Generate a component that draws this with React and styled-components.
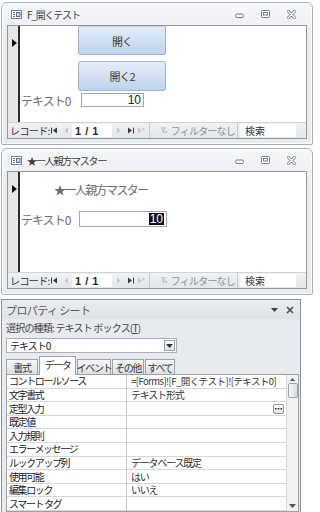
import React from "react";
import styled, { createGlobalStyle } from "styled-components";

const GlobalStyle = createGlobalStyle`
  html, body {
    margin: 0;
    background: #fff;
  }
  body {
    font-family: "Noto Sans CJK JP", "Noto Sans", sans-serif;
    color: #222;
  }
`;

const Page = styled.div`
  width: 320px;
  height: 512px;
  overflow: hidden;
  box-sizing: border-box;
  padding-top: 2px;
  display: flex;
  flex-direction: column;
  gap: 3px;
`;

/* ---------- form window ---------- */

const Frame = styled.div`
  margin-left: 1px;
  width: 312px;
  box-sizing: border-box;
  border: 1px solid #a7afb9;
  border-radius: 6px 6px 2px 2px;
  background: linear-gradient(#f6f7f9, #e8ebef 40px);
  box-shadow: inset 0 0 0 1px rgba(255, 255, 255, 0.8);
  padding: 0 5px 5px 5px;
`;

const TitleBar = styled.div`
  height: 22px;
  display: flex;
  align-items: center;
  padding: 0 11px 0 4px;
  font-size: 10px;
  color: #3d3d3d;
`;

const TitleText = styled.span`
  margin-left: 5px;
  flex: 1;
  white-space: nowrap;
  letter-spacing: -1.2px;
`;

const Controls = styled.div`
  display: flex;
  align-items: center;
  gap: 17px;
`;

const Client = styled.div`
  border: 1px solid #8f969f;
  background: #fff;
`;

const Body = styled.div`
  display: flex;
  height: ${(p) => p.$h}px;
`;

const Selector = styled.div`
  width: 12px;
  background: #e6e6e6;
  border-right: 2px solid #2b2b2b;
  padding: 2px 0 0 4px;
  box-sizing: border-box;
  flex: none;
`;

const Canvas = styled.div`
  flex: 1;
  display: flex;
  flex-direction: column;
  padding-left: 1px;
`;

const CmdButton = styled.div`
  margin-left: 57px;
  margin-top: ${(p) => p.$top}px;
  width: 88px;
  height: ${(p) => p.$h}px;
  box-sizing: border-box;
  border: 1px solid #9fb3cc;
  border-top-color: ${(p) => (p.$cut ? "transparent" : "#a9bcd3")};
  border-radius: ${(p) => (p.$cut ? "0 0 3px 3px" : "3px")};
  background: linear-gradient(#e4edf8, #cfdff2 55%, #bfd3ec);
  display: flex;
  align-items: center;
  justify-content: center;
  font-size: 11px;
  letter-spacing: -1px;
  color: #3a3a3a;
`;

const FormTitle = styled.div`
  margin: 9px 0 0 33px;
  font-size: 12px;
  letter-spacing: -1.6px;
  color: #6b6b6b;
  height: 18px;
  line-height: 18px;
  white-space: nowrap;
`;

const FieldRow = styled.div`
  display: flex;
  align-items: center;
  margin-top: ${(p) => p.$top}px;
`;

const FieldLabel = styled.span`
  width: ${(p) => p.$w}px;
  font-size: 12px;
  letter-spacing: -1px;
  color: #6e6e6e;
  line-height: 13px;
  white-space: nowrap;
`;

const FieldInput = styled.div`
  width: ${(p) => p.$w}px;
  height: ${(p) => p.$h}px;
  box-sizing: border-box;
  border: 1px solid #a6a6a6;
  background: #fff;
  display: flex;
  align-items: center;
  justify-content: flex-end;
  padding-right: 2px;
  font-family: "Liberation Sans", sans-serif;
  font-size: 12px;
  color: #222;
`;

const Selected = styled.span`
  background: #111;
  color: #fff;
  line-height: 12px;
  padding: 0 1px;
`;

/* ---------- navigation bar ---------- */

const NavBar = styled.div`
  height: 15px;
  display: flex;
  align-items: center;
  border-top: 1px solid #cfd3d8;
  background: linear-gradient(#f0f2f4, #e3e6ea);
  font-size: 10px;
  color: #333;
`;

const NavLabel = styled.span`
  width: 38px;
  padding-left: 2px;
  white-space: nowrap;
  letter-spacing: -0.6px;
`;

const NavIcon = styled.span`
  width: ${(p) => p.$w || 12}px;
  display: flex;
  justify-content: center;
  align-items: center;
`;

const RecordBox = styled.div`
  width: 40px;
  height: 13px;
  background: #fff;
  display: flex;
  align-items: center;
  padding-left: 3px;
  box-sizing: border-box;
  font-family: "Liberation Sans", sans-serif;
  font-size: 11px;
  font-weight: bold;
  color: #2a2a2a;
  letter-spacing: 0.5px;
`;

const NavSep = styled.span`
  width: 1px;
  height: 15px;
  background: #c6cbd1;
  margin: 0 ${(p) => p.$m || 3}px;
`;

const FilterText = styled.span`
  display: flex;
  align-items: center;
  gap: 3px;
  color: #8f8f8f;
  width: 74px;
  padding-left: 8px;
  white-space: nowrap;
  letter-spacing: -0.8px;
`;

const SearchBox = styled.div`
  width: 56px;
  height: 13px;
  background: #fff;
  padding-left: 5px;
  box-sizing: border-box;
  line-height: 13px;
  color: #333;
`;

/* ---------- property sheet ---------- */

const Sheet = styled.div`
  margin-left: 1px;
  margin-top: 1px;
  width: 300px;
  height: 218px;
  box-sizing: border-box;
  border: 1px solid #8b929b;
  background: #e7eaee;
  padding: 0 4px 4px;
  display: flex;
  flex-direction: column;
`;

const SheetHeader = styled.div`
  height: 20px;
  margin: 0 -4px;
  padding: 0 6px 0 4px;
  display: flex;
  align-items: center;
  background: linear-gradient(#e9ecf0, #dfe3e8);
  font-size: 11px;
  color: #5a5a5a;
`;

const SheetTitle = styled.span`
  flex: 1;
  letter-spacing: -0.6px;
`;

const HeaderButtons = styled.div`
  display: flex;
  align-items: center;
  gap: 8px;
`;

const SelectionType = styled.div`
  height: 17px;
  line-height: 17px;
  font-size: 10px;
  letter-spacing: -0.8px;
  color: #444;
  white-space: nowrap;
  u {
    text-decoration: underline;
  }
`;

const Combo = styled.div`
  margin-top: 2px;
  width: 171px;
  height: 15px;
  box-sizing: border-box;
  border: 1px solid #a9b0b9;
  background: #fff;
  display: flex;
  align-items: center;
  padding-left: 3px;
  font-size: 10px;
  letter-spacing: -1px;
`;

const ComboText = styled.span`
  flex: 1;
`;

const ComboButton = styled.span`
  width: 11px;
  height: 11px;
  margin-right: 1px;
  box-sizing: border-box;
  border: 1px solid #9ba3ad;
  background: linear-gradient(#fbfbfb, #e2e4e7);
  display: flex;
  align-items: center;
  justify-content: center;
`;

const Tabs = styled.div`
  margin-top: 3px;
  height: 19px;
  display: flex;
  align-items: flex-end;
  gap: 1px;
  position: relative;
  z-index: 1;
`;

const Tab = styled.div`
  width: ${(p) => p.$w}px;
  height: ${(p) => (p.$active ? 19 : 16)}px;
  box-sizing: border-box;
  border: 1px solid #9aa1aa;
  border-bottom: ${(p) => (p.$active ? "none" : "1px solid #9aa1aa")};
  background: ${(p) =>
    p.$active ? "#fff" : "linear-gradient(#f7f7f7, #dcdfe3)"};
  display: flex;
  align-items: center;
  justify-content: center;
  font-size: 10px;
  letter-spacing: -1.3px;
  white-space: nowrap;
  color: #333;
  padding-bottom: ${(p) => (p.$active ? 3 : 0)}px;
`;

const GridWrap = styled.div`
  display: flex;
  margin-top: -1px;
  width: 291px;
  border: 1px solid #9aa1aa;
  background: #fff;
`;

const Grid = styled.div`
  flex: 1;
  min-width: 0;
  display: grid;
  grid-template-columns: 120px minmax(0, 1fr);
  grid-auto-rows: 13.6px;
`;

const Cell = styled.div`
  border-bottom: 1px solid #d6d8db;
  border-right: ${(p) => (p.$name ? "1px solid #c3c6ca" : "none")};
  padding-left: ${(p) => (p.$name ? 2 : 4)}px;
  font-size: 10px;
  line-height: 12px;
  letter-spacing: ${(p) => (p.$name ? "-1.4px" : "-1.2px")};
  color: ${(p) => (p.$name ? "#222" : "#333")};
  white-space: nowrap;
  display: flex;
  align-items: center;
  justify-content: space-between;
`;

const Formula = styled.span`
  font-size: 9.5px;
  letter-spacing: -0.55px;
`;

const Ellipsis = styled.span`
  width: 11px;
  height: 10px;
  margin-right: 2px;
  box-sizing: border-box;
  border: 1px solid #8d949c;
  border-radius: 2px;
  background: linear-gradient(#fff, #e2e4e7);
  display: flex;
  align-items: center;
  justify-content: center;
`;

const ScrollBar = styled.div`
  width: 12px;
  border-left: 1px solid #d8dadd;
  background: #f1f1f1;
  display: flex;
  flex-direction: column;
  align-items: center;
  justify-content: space-between;
  padding: 3px 0;
  box-sizing: border-box;
`;

const Thumb = styled.div`
  width: 10px;
  height: 15px;
  box-sizing: border-box;
  border: 1px solid #9ea4ab;
  border-radius: 2px;
  background: linear-gradient(90deg, #f6f6f6, #dadcdf);
  margin-top: 2px;
`;

const ScrollSpacer = styled.div`
  flex: 1;
`;

/* ---------- icons ---------- */

const FormIcon = () => (
  <svg width="11" height="9" viewBox="0 0 11 9">
    <rect x="0.5" y="0.5" width="10" height="8" fill="#fff" stroke="#6f819b" />
    <path d="M2 2.5h2M2 4.5h2M2 6.5h2" stroke="#5f7290" />
    <rect x="5.5" y="2.5" width="3.5" height="4" fill="#c9d7ea" stroke="#5f7290" />
  </svg>
);

const MinIcon = () => (
  <svg width="9" height="9" viewBox="0 0 9 9">
    <rect x="0.5" y="4" width="8" height="3.5" rx="1.5" fill="#fff" stroke="#7a7f86" />
  </svg>
);

const MaxIcon = () => (
  <svg width="9" height="9" viewBox="0 0 9 9">
    <rect x="0.5" y="0.5" width="8" height="7" rx="1" fill="#fff" stroke="#7a7f86" />
    <rect x="2.5" y="2.5" width="4" height="2.5" fill="none" stroke="#7a7f86" />
  </svg>
);

const CloseIcon = () => (
  <svg width="9" height="9" viewBox="0 0 9 9">
    <path d="M1 1l7 7M8 1l-7 7" stroke="#7a7f86" strokeWidth="3" strokeLinecap="round" />
    <path d="M1 1l7 7M8 1l-7 7" stroke="#fff" strokeWidth="1.2" strokeLinecap="round" />
  </svg>
);

const RowMarker = () => (
  <svg width="5" height="8" viewBox="0 0 5 8">
    <path d="M0 0l5 4-5 4z" fill="#111" />
  </svg>
);

const NavGlyph = ({ kind, dim }) => {
  const c = dim ? "#c4c7cb" : "#3a3a3a";
  return (
    <svg width="8" height="7" viewBox="0 0 8 7">
      {kind === "first" && (
        <>
          <path d="M1.5 0.5v6" stroke={c} />
          <path d="M7 0.5L3 3.5l4 3z" fill={c} />
        </>
      )}
      {kind === "prev" && <path d="M6 0.5L2.5 3.5 6 6.5z" fill={c} />}
      {kind === "next" && <path d="M2 0.5l3.5 3-3.5 3z" fill={c} />}
      {kind === "last" && (
        <>
          <path d="M1 0.5l4 3-4 3z" fill={c} />
          <path d="M6.5 0.5v6" stroke={c} />
        </>
      )}
      {kind === "new" && (
        <>
          <path d="M1 0.5l4 3-4 3z" fill={c} />
          <path d="M6.5 0.5v3M5 2h3" stroke="#e3c77a" />
        </>
      )}
    </svg>
  );
};

const FilterIcon = () => (
  <svg width="10" height="9" viewBox="0 0 10 9">
    <path d="M0.5 0.5h6l-2.3 3v4l-1.4-1v-3z" fill="none" stroke="#a2a6ab" />
    <path d="M6 5l3 3M9 5l-3 3" stroke="#a2a6ab" />
  </svg>
);

const SmallDown = ({ color = "#333" }) => (
  <svg width="7" height="4" viewBox="0 0 7 4">
    <path d="M0 0h7L3.5 4z" fill={color} />
  </svg>
);

const SmallUp = ({ color = "#555" }) => (
  <svg width="5" height="3" viewBox="0 0 5 3">
    <path d="M0 3h5L2.5 0z" fill={color} />
  </svg>
);

const CloseX = () => (
  <svg width="8" height="8" viewBox="0 0 8 8">
    <path d="M1 1l6 6M7 1L1 7" stroke="#4a4f57" strokeWidth="1.6" />
  </svg>
);

const Dots = () => (
  <svg width="7" height="2" viewBox="0 0 7 2">
    <rect x="0" y="0" width="1.5" height="1.5" fill="#222" />
    <rect x="2.75" y="0" width="1.5" height="1.5" fill="#222" />
    <rect x="5.5" y="0" width="1.5" height="1.5" fill="#222" />
  </svg>
);

/* ---------- composites ---------- */

function NavigationBar() {
  return (
    <NavBar>
      <NavLabel>レコード:</NavLabel>
      <NavIcon $w={11}>
        <NavGlyph kind="first" />
      </NavIcon>
      <NavIcon $w={13}>
        <NavGlyph kind="prev" dim />
      </NavIcon>
      <RecordBox>1 / 1</RecordBox>
      <NavIcon $w={13}>
        <NavGlyph kind="next" dim />
      </NavIcon>
      <NavIcon $w={11}>
        <NavGlyph kind="last" />
      </NavIcon>
      <NavIcon $w={10}>
        <NavGlyph kind="new" dim />
      </NavIcon>
      <NavSep $m={3} />
      <FilterText>
        <FilterIcon />
        フィルターなし
      </FilterText>
      <NavSep $m={2} />
      <SearchBox>検索</SearchBox>
    </NavBar>
  );
}

function FormWindow({ title, bodyHeight, children }) {
  return (
    <Frame>
      <TitleBar>
        <FormIcon />
        <TitleText>{title}</TitleText>
        <Controls>
          <MinIcon />
          <MaxIcon />
          <CloseIcon />
        </Controls>
      </TitleBar>
      <Client>
        <Body $h={bodyHeight}>
          <Selector>
            <RowMarker />
          </Selector>
          <Canvas>{children}</Canvas>
        </Body>
        <NavigationBar />
      </Client>
    </Frame>
  );
}

const rows = [
  ["コントロールソース", "=[Forms]![F_開くテスト]![テキスト0]"],
  ["文字書式", "テキスト形式"],
  ["定型入力", "", true],
  ["既定値", ""],
  ["入力規則", ""],
  ["エラーメッセージ", ""],
  ["ルックアップ列", "データベース既定"],
  ["使用可能", "はい"],
  ["編集ロック", "いいえ"],
  ["スマート タグ", ""],
];

const tabs = [
  ["書式", 32],
  ["データ", 37],
  ["イベント", 34],
  ["その他", 32],
  ["すべて", 30],
];

function PropertySheet() {
  return (
    <Sheet>
      <SheetHeader>
        <SheetTitle>プロパティ シート</SheetTitle>
        <HeaderButtons>
          <SmallDown color="#3d4249" />
          <CloseX />
        </HeaderButtons>
      </SheetHeader>
      <SelectionType>
        選択の種類: テキスト ボックス(<u>T</u>)
      </SelectionType>
      <Combo>
        <ComboText>テキスト0</ComboText>
        <ComboButton>
          <SmallDown color="#333" />
        </ComboButton>
      </Combo>
      <Tabs>
        {tabs.map(([label, w]) => (
          <Tab key={label} $w={w} $active={label === "データ"}>
            {label}
          </Tab>
        ))}
      </Tabs>
      <GridWrap>
        <Grid>
          {rows.map(([name, value, more], i) => (
            <React.Fragment key={name}>
              <Cell $name>{name}</Cell>
              <Cell>
                {i === 0 ? <Formula>{value}</Formula> : <span>{value}</span>}
                {more && (
                  <Ellipsis>
                    <Dots />
                  </Ellipsis>
                )}
              </Cell>
            </React.Fragment>
          ))}
        </Grid>
        <ScrollBar>
          <SmallUp />
          <Thumb />
          <ScrollSpacer />
          <SmallDown color="#555" />
        </ScrollBar>
      </GridWrap>
    </Sheet>
  );
}

export default function App() {
  return (
    <>
      <GlobalStyle />
      <Page>
        <FormWindow title="F_開くテスト" bodyHeight={96}>
          <CmdButton $top={0} $h={29} $cut>
            開く
          </CmdButton>
          <CmdButton $top={6} $h={30}>
            開く2
          </CmdButton>
          <FieldRow $top={2}>
            <FieldLabel $w={60}>テキスト0</FieldLabel>
            <FieldInput $w={63} $h={14}>
              10
            </FieldInput>
          </FieldRow>
        </FormWindow>
        <FormWindow title="★一人親方マスター" bodyHeight={100}>
          <FormTitle>★一人親方マスター</FormTitle>
          <FieldRow $top={12}>
            <FieldLabel $w={58}>テキスト0</FieldLabel>
            <FieldInput $w={88} $h={16}>
              <Selected>10</Selected>
            </FieldInput>
          </FieldRow>
        </FormWindow>
        <PropertySheet />
      </Page>
    </>
  );
}
